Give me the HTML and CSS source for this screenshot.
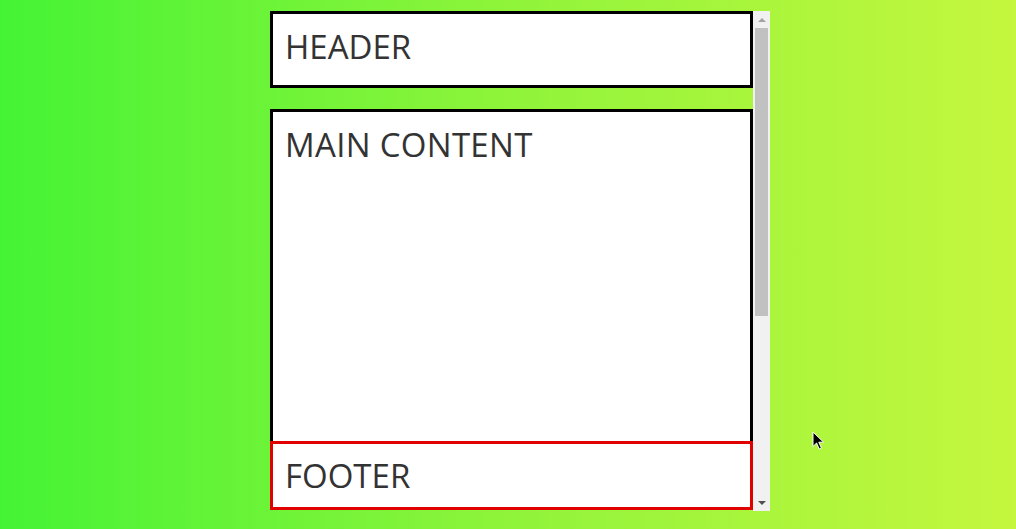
FILE: index.html
```html
<!DOCTYPE html>
<html>
<head>
<meta charset="utf-8">
<link rel="stylesheet" href="styles.css">
</head>
<body>
<div class="frame">
  <div class="viewport">
    <header class="box header">HEADER</header>
    <main class="box main">MAIN CONTENT</main>
    <footer class="box footer">FOOTER</footer>
  </div>
  <div class="scrollbar">
    <div class="sb-btn"><span class="arrow up"></span></div>
    <div class="sb-track"><div class="sb-thumb"></div></div>
    <div class="sb-btn"><span class="arrow down"></span></div>
  </div>
</div>
<svg class="cursor" width="14" height="20" viewBox="0 0 14 20">
  <path d="M1 1 L1 15.5 L4.6 12 L7.2 18 L9.4 17 L6.8 11.2 L11.6 11.2 Z" fill="#000" stroke="#fff" stroke-width="1" stroke-linejoin="round"/>
</svg>
</body>
</html>
```

FILE: styles.css
```css
html, body {
  margin: 0;
  height: 100%;
}
body {
  background: linear-gradient(to right, #45f335 0%, #8ff43a 50%, #c4f73e 100%);
  font-family: "Open Sans", "Noto Sans", sans-serif;
  color: #333;
  position: relative;
  overflow: hidden;
}
.frame {
  display: flex;
  width: 500px;
  height: 500px;
  margin: 11px 0 0 270px;
}
.viewport {
  flex: 1;
  display: flex;
  flex-direction: column;
  overflow: hidden;
  padding-bottom: 1px;
}
.box {
  display: block;
  background: #fff;
  border: 3px solid #000;
  font-size: 33px;
  line-height: 44px;
  padding: 11px 12px 0;
  box-sizing: border-box;
}
.header {
  height: 77px;
  flex: none;
  margin-bottom: 21px;
}
.main {
  flex: 1;
  border-bottom: 0;
  padding-top: 11px;
  letter-spacing: 0.3px;
}
.footer {
  flex: none;
  height: 69px;
  border-color: #e00000;
  padding-top: 10px;
}
.scrollbar {
  width: 17px;
  flex: none;
  display: flex;
  flex-direction: column;
  background: #f1f1f1;
}
.sb-btn {
  height: 17px;
  flex: none;
  display: flex;
  align-items: center;
  justify-content: center;
}
.arrow {
  width: 0;
  height: 0;
  border-left: 4px solid transparent;
  border-right: 4px solid transparent;
}
.arrow.up {
  border-bottom: 4px solid #a3a3a3;
}
.arrow.down {
  border-top: 4px solid #505050;
}
.sb-track {
  flex: 1;
  padding: 0 2px;
}
.sb-thumb {
  height: 288px;
  background: #c1c1c1;
}
.cursor {
  position: absolute;
  left: 812px;
  top: 431px;
}
```
